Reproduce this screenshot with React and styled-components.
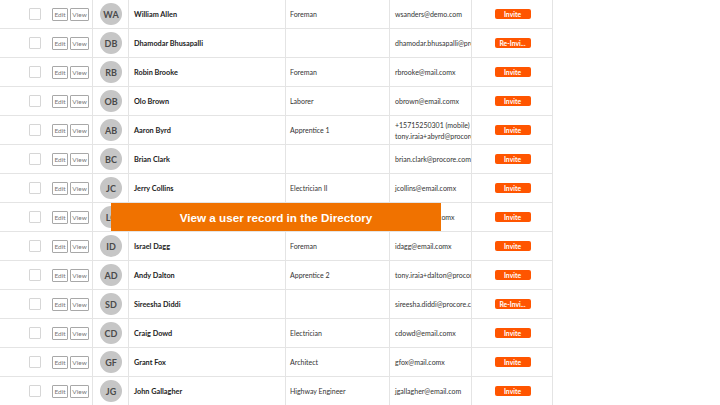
import React from "react";
import styled, { createGlobalStyle } from "styled-components";

const Global = createGlobalStyle`
  html, body { margin: 0; padding: 0; background: #fff; overflow: hidden; }
  body { font-family: Lato, "Liberation Sans", sans-serif; }
`;

const Page = styled.div`
  position: relative;
  width: 720px;
  height: 405px;
  overflow: hidden;
  background: #fff;
`;

const Table = styled.div`
  width: 553px;
  display: grid;
  grid-template-columns: 93px 36px 157px 104px 82px 81px;
  grid-auto-rows: 29px;
`;

const Cell = styled.div`
  box-sizing: border-box;
  border-bottom: 1px solid #e4e4e4;
  border-right: 1px solid #e4e4e4;
  display: flex;
  overflow: hidden;
  white-space: nowrap;
  font-size: 7px;
  color: #333;
  padding: ${(p) => p.$pad || "0"};
  flex-direction: ${(p) => (p.$column ? "column" : "row")};
  align-items: ${(p) => (p.$column ? "flex-start" : "center")};
  justify-content: ${(p) => (p.$column ? "center" : p.$justify || "flex-start")};
  gap: ${(p) => (p.$column ? "3px" : "0")};
`;

const ActionCell = styled(Cell)`
  padding-left: 29px;
`;

const Checkbox = styled.span`
  width: 10px;
  height: 10px;
  border: 1px solid #d6d6d6;
  border-radius: 1px;
  background: #fff;
  margin-right: 11px;
  flex: none;
`;

const SmallBtn = styled.span`
  box-sizing: border-box;
  height: 13px;
  width: ${(p) => p.$w}px;
  border: 1px solid #a8a8a8;
  border-radius: 1px;
  font-size: 6.5px;
  color: #777;
  display: flex;
  align-items: center;
  justify-content: center;
  margin-right: 2px;
  flex: none;
`;

const Avatar = styled.span`
  width: 22px;
  height: 22px;
  border-radius: 50%;
  background: #c6c6c6;
  color: #4a4a4a;
  font-weight: 700;
  font-size: 9px;
  display: flex;
  align-items: center;
  justify-content: center;
  margin-left: 7px;
  flex: none;
`;

const Name = styled.span`
  font-weight: 700;
  color: #222;
  font-size: 7.3px;
`;

const InviteBtn = styled.span`
  width: 36px;
  height: 10px;
  border-radius: 2px;
  background: #ff5500;
  color: #fff;
  font-weight: 700;
  font-size: 6.8px;
  display: flex;
  align-items: center;
  justify-content: center;
  overflow: hidden;
  white-space: nowrap;
  margin-left: 1px;
`;

const Banner = styled.div`
  position: absolute;
  left: 111px;
  top: 203px;
  width: 330px;
  height: 28px;
  background: #f07200;
  color: #fff;
  font-family: "Liberation Sans", Arial, sans-serif;
  font-weight: 700;
  font-size: 11.7px;
  display: flex;
  align-items: center;
  justify-content: center;
`;

const rows = [
  { i: "WA", n: "William Allen", r: "Foreman", e: ["wsanders@demo.com"], b: "Invite" },
  { i: "DB", n: "Dhamodar Bhusapalli", r: "", e: ["dhamodar.bhusapalli@procore.com"], b: "Re-Invi..." },
  { i: "RB", n: "Robin Brooke", r: "Foreman", e: ["rbrooke@mail.comx"], b: "Invite" },
  { i: "OB", n: "Olo Brown", r: "Laborer", e: ["obrown@email.comx"], b: "Invite" },
  { i: "AB", n: "Aaron Byrd", r: "Apprentice 1", e: ["+15715250301 (mobile)", "tony.iraia+abyrd@procore.com"], b: "Invite" },
  { i: "BC", n: "Brian Clark", r: "", e: ["brian.clark@procore.com"], b: "Invite" },
  { i: "JC", n: "Jerry Collins", r: "Electrician II", e: ["jcollins@email.comx"], b: "Invite" },
  { i: "LC", n: "Lisa Cooper", r: "", e: ["lcooper@mail.comx"], b: "Invite" },
  { i: "ID", n: "Israel Dagg", r: "Foreman", e: ["idagg@email.comx"], b: "Invite" },
  { i: "AD", n: "Andy Dalton", r: "Apprentice 2", e: ["tony.iraia+dalton@procore.com"], b: "Invite" },
  { i: "SD", n: "Sireesha Diddi", r: "", e: ["sireesha.diddi@procore.com"], b: "Re-Invi..." },
  { i: "CD", n: "Craig Dowd", r: "Electrician", e: ["cdowd@email.comx"], b: "Invite" },
  { i: "GF", n: "Grant Fox", r: "Architect", e: ["gfox@mail.comx"], b: "Invite" },
  { i: "JG", n: "John Gallagher", r: "Highway Engineer", e: ["jgallagher@email.com"], b: "Invite" },
];

export default function App() {
  return (
    <Page>
      <Global />
      <Table>
        {rows.map((row, k) => (
          <React.Fragment key={k}>
            <ActionCell>
              <Checkbox />
              <SmallBtn $w={16}>Edit</SmallBtn>
              <SmallBtn $w={19}>View</SmallBtn>
            </ActionCell>
            <Cell>
              <Avatar>{row.i}</Avatar>
            </Cell>
            <Cell $pad="0 0 0 5px">
              <Name>{row.n}</Name>
            </Cell>
            <Cell $pad="0 0 0 4px">{row.r}</Cell>
            <Cell $pad="0 0 0 5px" $column={row.e.length > 1}>
              {row.e.map((t, j) => (
                <span key={j}>{t}</span>
              ))}
            </Cell>
            <Cell $justify="center">
              <InviteBtn>{row.b}</InviteBtn>
            </Cell>
          </React.Fragment>
        ))}
      </Table>
      <Banner>View a user record in the Directory</Banner>
    </Page>
  );
}
